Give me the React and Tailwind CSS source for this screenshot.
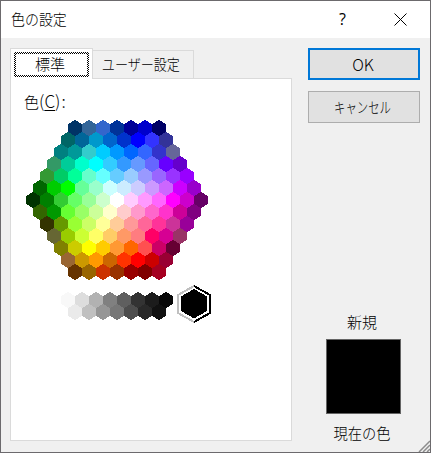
const ROWS = [
  "003366 336699 3366CC 003399 000099 0000CC 000066",
  "006666 006699 0099CC 0066CC 0033CC 0000FF 3333FF 333399",
  "008080 009999 33CCCC 00CCFF 0099FF 0066FF 3366FF 3333CC 666699",
  "339966 00CC99 00FFCC 00FFFF 33CCFF 3399FF 6699FF 6666FF 6600FF 6600CC",
  "339933 00CC66 00FF99 66FFCC 66FFFF 66CCFF 99CCFF 9999FF 9966FF 9933FF 9900FF",
  "006600 00CC00 00FF00 66FF99 99FFCC CCFFFF CCECFF CCCCFF CC99FF CC66FF CC00FF 9900CC",
  "003300 008000 33CC33 66FF66 99FF99 CCFFCC FFFFFF FFCCFF FF99FF FF66FF FF00FF CC00CC 660066",
  "336600 009900 66FF33 99FF66 CCFF99 FFFFCC FFCCCC FF99CC FF66CC FF33CC CC0099 800080",
  "333300 669900 99FF33 CCFF66 FFFF99 FFCC99 FF9999 FF6699 FF3399 CC3399 990099",
  "666633 99CC00 CCFF33 FFFF66 FFCC66 FF9966 FF7C80 FF0066 D60093 993366",
  "808000 CCCC00 FFFF00 FFCC00 FF9933 FF6600 FF5050 CC0066 660033",
  "996633 CC9900 FF9900 CC6600 FF3300 FF0000 CC0000 990033",
  "663300 996600 CC3300 993300 990000 800000 A50021",
].map((row) => row.split(" "));

const GRAYS = [
  "F8F8F8 DDDDDD B2B2B2 808080 5F5F5F 333333 1C1C1C 080808",
  "EAEAEA C0C0C0 969696 777777 4D4D4D 292929 111111",
].map((row) => row.split(" "));

// Pointy-top hexagon, 14 wide and 16 high, from its bounding box's corner.
function Hex({ x, y, color }) {
  return (
    <polygon
      points={`${x + 7},${y} ${x + 14},${y + 4} ${x + 14},${y + 12} ${x + 7},${y + 16} ${x},${y + 12} ${x},${y + 4}`}
      fill={`#${color}`}
    />
  );
}

function Honeycomb() {
  return (
    <svg width="182" height="160" viewBox="0 0 182 160" shapeRendering="crispEdges" className="block">
      {ROWS.map((row, r) =>
        row.map((c, i) => <Hex key={`${r}-${i}`} x={(13 - row.length) * 7 + i * 14} y={r * 12} color={c} />)
      )}
    </svg>
  );
}

function GrayScale() {
  return (
    <svg width="152" height="38" viewBox="0 0 152 38" shapeRendering="crispEdges" className="block">
      {GRAYS.map((row, r) =>
        row.map((c, i) => <Hex key={`${r}-${i}`} x={r * 7 + i * 14} y={7 + r * 12} color={c} />)
      )}
      <polyline points="133,1 117,10 117,28 133,37" fill="none" stroke="#c0c0c0" strokeWidth="2" />
      <polyline points="133,1 149,10 149,28 133,37" fill="none" stroke="#000" strokeWidth="2" />
      <polygon points="133,4 146,11.5 146,26 133,33.5 120,26 120,11.5" fill="#000" />
    </svg>
  );
}

export default function App() {
  return (
    <div className="flex h-[453px] w-[431px] flex-col overflow-hidden border border-[#6c6a6d] bg-[#f0f0f0] font-['Noto_Sans_CJK_JP',sans-serif] text-[15px] leading-5 whitespace-nowrap text-black">
      <header className="flex h-[37px] shrink-0 items-center bg-white pl-2.5">
        <h1 className="w-[56px] origin-left scale-x-[0.93] pb-0.5 text-[15px] font-light">色の設定</h1>
        <span className="ml-[272px] w-3 pb-0.5 font-['Open_Sans',sans-serif] text-[16px]">?</span>
        <svg width="13" height="13" viewBox="0 0 13 13" className="ml-[43px]">
          <path d="M.5.5l12 12M12.5.5l-12 12" stroke="#000" strokeWidth="1" fill="none" />
        </svg>
      </header>
      <div className="flex min-h-0 flex-1 pl-[9px]">
        <main className="flex w-[282px] flex-col pt-[10px]">
          <div className="flex h-[30px] items-end">
            <div className="z-10 -mb-px h-[31px] w-[83px] border border-b-0 border-[#dadada] bg-white p-[3px]">
              <div className="h-[25px] bg-[repeating-conic-gradient(#000_0_25%,#fff_0_50%)] bg-[length:2px_2px] p-[2px]">
                <div className="flex h-[21px] items-center justify-center bg-white pr-[3px] pb-0.5 font-light">標準</div>
              </div>
            </div>
            <div className="flex h-[28px] w-[101px] items-center justify-center border border-b-0 border-l-0 border-[#dadada] pr-1 pb-0.5">
              <span className="flex scale-x-[0.87] font-light">ユーザー設定</span>
            </div>
          </div>
          <section className="h-[363px] border border-[#dadada] bg-white pt-[12px] pl-[13px]">
            <p className="h-5 text-[15px] font-light">
              色
              <span className="text-[17px]">
                (<span className="underline underline-offset-2">C</span>
                )<span className="ml-px">:</span>
              </span>
            </p>
            <div className="mt-[9px] ml-[2px]">
              <Honeycomb />
            </div>
            <div className="mt-[5px] ml-[37px]">
              <GrayScale />
            </div>
          </section>
        </main>
        <aside className="ml-4 flex w-[113px] flex-col pt-[10px]">
          <button className="h-8 w-[112px] border-2 border-[#0078d7] bg-[#e1e1e1] pr-0.5 pb-px text-[16px] font-light">
            OK
          </button>
          <button className="mt-[11px] flex h-8 w-[112px] items-center justify-center border border-[#adadad] bg-[#e1e1e1] pr-0.5">
            <span className="scale-x-[0.76] font-light">キャンセル</span>
          </button>
          <div className="mt-[189px] flex w-[110px] flex-col items-center font-light">
            <span className="mr-0.5">新規</span>
            <div className="mt-[7px] ml-px h-[75px] w-[75px] border border-[#646464] bg-black" />
            <span className="mt-[9px] mr-0.5 scale-x-[0.95]">現在の色</span>
          </div>
        </aside>
        <svg width="12" height="12" viewBox="0 0 12 12" className="-ml-[3px] shrink-0 self-end">
          <path d="M1 12L12 1M5 12l7-7M9 12l3-3" stroke="#8c8c8c" strokeWidth="1.5" />
        </svg>
      </div>
    </div>
  );
}
